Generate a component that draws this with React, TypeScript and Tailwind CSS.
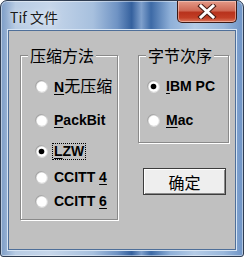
import React from "react";

const cjk = "font-['Noto_Sans_CJK_SC','Noto_Sans_CJK_JP',sans-serif]";
const latin = "font-['Liberation_Sans','Noto_Sans_CJK_SC',sans-serif]";

function Radio({ checked }: { checked?: boolean }) {
  return (
    <svg width="13" height="13" viewBox="0 0 13 13" className="shrink-0">
      <defs>
        <linearGradient id="ring" x1="0" y1="0" x2="1" y2="1">
          <stop offset="0" stopColor="#8c8c8c" />
          <stop offset="0.5" stopColor="#c4c4c4" />
          <stop offset="1" stopColor="#f6f6f6" />
        </linearGradient>
      </defs>
      <circle cx="6.5" cy="6.5" r="6.4" fill="url(#ring)" />
      <circle cx="6.5" cy="6.5" r="5.4" fill="#dedede" />
      <circle cx="6.8" cy="6.8" r="5" fill="#ffffff" />
      {checked && <circle cx="6.5" cy="6.5" r="2.8" fill="#000" />}
    </svg>
  );
}

function Option({
  label,
  checked,
  focus,
  className,
}: {
  label: React.ReactNode;
  checked?: boolean;
  focus?: boolean;
  className?: string;
}) {
  return (
    <div className={`flex h-[16px] items-center gap-[6px] ${className ?? ""}`}>
      <Radio checked={checked} />
      <span
        className={`${latin} whitespace-nowrap text-[14px] font-bold leading-[15px] text-black ${
          focus ? "outline-1 outline-dotted outline-black -ml-[1px] px-[1px]" : ""
        }`}
      >
        {label}
      </span>
    </div>
  );
}

function GroupBox({
  title,
  className,
  children,
}: {
  title: string;
  className?: string;
  children: React.ReactNode;
}) {
  return (
    <div
      className={`relative border border-[#8a8a8a] shadow-[inset_1px_1px_0_#fff,1px_1px_0_#fff] ${className ?? ""}`}
    >
      <span
        className={`${cjk} absolute -top-[11px] left-[7px] bg-[#c0c0c0] px-[2px] text-[16px] leading-[20px] text-black`}
      >
        {title}
      </span>
      {children}
    </div>
  );
}

export default function App() {
  return (
    <div className="h-[257px] w-[244px] overflow-hidden">
      <div className="flex h-[257px] w-[244px] flex-col rounded-t-[7px] rounded-b-[3px] border border-[#2f3d52] bg-[linear-gradient(90deg,#7c9cc6_0%,#b8cce4_6%,#c6d6ea_20%,#a7c0de_38%,#6f93c4_48%,#35619e_54%,#7fa0cc_58%,#3d6aa6_62%,#8fb0d8_70%,#b4cbe6_80%,#9ab8dc_92%,#6f94c6_100%)] px-[7px] pb-[6px] shadow-[inset_0_0_0_1px_rgba(255,255,255,0.45)]">
        <div className="flex h-[29px] items-start justify-between">
          <span className={`${cjk} mt-[7px] pl-[2px] text-[14px] leading-[18px] text-[#1a1a1a] [text-shadow:0_0_6px_rgba(255,255,255,0.9)]`}>
            Tif 文件
          </span>
          <div className="-mr-[1px] flex h-[22px] w-[60px] items-center justify-center rounded-b-[5px] border border-t-0 border-[#3b1a16] bg-[linear-gradient(180deg,#e49a88_0%,#cf6a56_45%,#b8321c_55%,#c23f26_80%,#dc7a60_100%)] shadow-[inset_0_0_0_1px_rgba(255,220,210,0.5)]">
            <svg width="20" height="15" viewBox="0 0 20 15">
              <path d="M4 2 L16 13 M16 2 L4 13" stroke="#4a1c14" strokeWidth="5" strokeLinecap="square" />
              <path d="M4 2 L16 13 M16 2 L4 13" stroke="#ffffff" strokeWidth="3" strokeLinecap="square" />
            </svg>
          </div>
        </div>
        <div className="flex flex-1 border border-[#4f6f99] bg-[#c0c0c0] pl-[11px] pt-[24px] shadow-[0_0_0_1px_#d6e4f4]">
          <GroupBox title="压缩方法" className="h-[165px] w-[98px] pl-[14px] pt-[22px]">
            <Option
              label={
                <>
                  <span className="underline underline-offset-2">N</span>
                  <span className={`${cjk} text-[16px] font-normal`}>无压缩</span>
                </>
              }
            />
            <Option className="mt-[18px]" label={<><span className="underline underline-offset-2">P</span>ackBit</>} />
            <Option className="mt-[15px]" checked focus label={<><span className="underline underline-offset-2">L</span>ZW</>} />
            <Option className="mt-[10px]" label={<>CCITT <span className="underline underline-offset-2">4</span></>} />
            <Option className="mt-[8px]" label={<>CCITT <span className="underline underline-offset-2">6</span></>} />
          </GroupBox>
          <div className="ml-[20px] flex flex-col">
            <GroupBox title="字节次序" className="h-[88px] w-[91px] pl-[8px] pt-[22px]">
              <Option checked label={<><span className="underline underline-offset-2">I</span>BM PC</>} />
              <Option className="mt-[18px]" label={<><span className="underline underline-offset-2">M</span>ac</>} />
            </GroupBox>
            <button
              type="button"
              className={`${cjk} ml-[5px] mt-[25px] h-[27px] w-[83px] border border-[#3c3c3c] bg-[#eeeeee] text-[16px] leading-[20px] text-black shadow-[inset_1px_1px_0_#ffffff,inset_-1px_-1px_0_#8a8a8a]`}
            >
              确定
            </button>
          </div>
        </div>
      </div>
    </div>
  );
}
